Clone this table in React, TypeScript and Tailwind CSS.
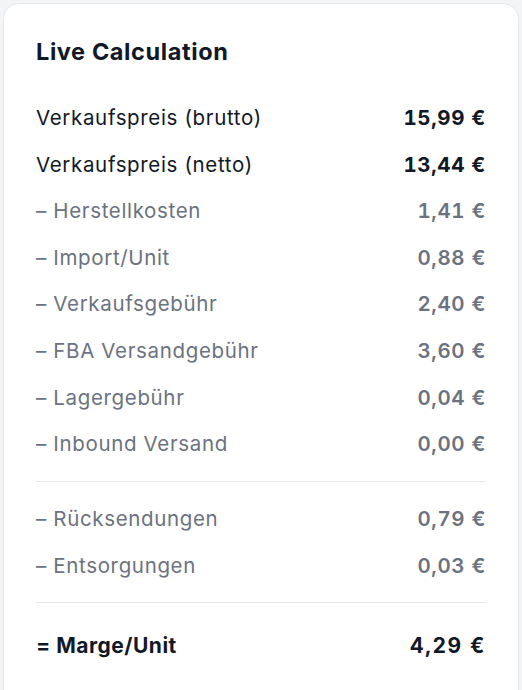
const rows = [
  { label: "Verkaufspreis (brutto)", value: "15,99 €", strong: true },
  { label: "Verkaufspreis (netto)", value: "13,44 €", strong: true },
  { label: "– Herstellkosten", value: "1,41 €" },
  { label: "– Import/Unit", value: "0,88 €" },
  { label: "– Verkaufsgebühr", value: "2,40 €" },
  { label: "– FBA Versandgebühr", value: "3,60 €" },
  { label: "– Lagergebühr", value: "0,04 €" },
  { label: "– Inbound Versand", value: "0,00 €" },
];

const extra = [
  { label: "– Rücksendungen", value: "0,79 €" },
  { label: "– Entsorgungen", value: "0,03 €" },
];

function Row({ label, value, strong }: { label: string; value: string; strong?: boolean }) {
  return (
    <div className="flex items-center justify-between text-[20.5px] leading-[28px] tracking-[0.65px]">
      <span className={strong ? "text-[#111827]" : "text-[#6b7280]"}>{label}</span>
      <span className={strong ? "font-bold tabular-nums text-[#111827]" : "font-semibold tabular-nums text-[#6b7280]"}>
        {value}
      </span>
    </div>
  );
}

export default function App() {
  return (
    <div className="h-screen overflow-hidden bg-[#f3f4f6] pl-[3px] pt-[3px]" style={{ fontFamily: "Inter, 'Noto Sans', sans-serif" }}>
      <div className="h-[720px] w-[516px] rounded-2xl border border-[#e5e7eb] bg-white px-[32px] pt-[33px]">
        <h2 className="text-[23.5px] font-bold leading-[30px] tracking-[0.6px] text-[#111827]">Live Calculation</h2>

        <div className="mt-[37px] flex flex-col gap-[18.6px]">
          {rows.map((r) => (
            <Row key={r.label} {...r} />
          ))}
        </div>

        <div className="mt-[22.8px] border-t border-[#e5e7eb]" />

        <div className="mt-[23px] flex flex-col gap-[18.6px]">
          {extra.map((r) => (
            <Row key={r.label} {...r} />
          ))}
        </div>

        <div className="mt-[22px] border-t border-[#e5e7eb]" />

        <div className="mt-[29px] flex items-center justify-between text-[21px] font-bold leading-[28px] tracking-[0.5px] text-[#111827]">
          <span>= Marge/Unit</span>
          <span className="tabular-nums tracking-[1.6px]">4,29 €</span>
        </div>
      </div>
    </div>
  );
}
